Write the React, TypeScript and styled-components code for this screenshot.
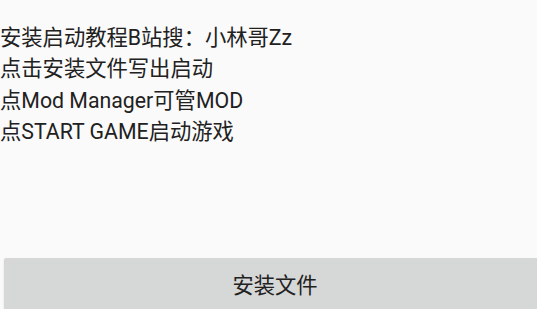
import React from "react";
import styled, { createGlobalStyle } from "styled-components";

const Global = createGlobalStyle`
  html, body { margin: 0; padding: 0; background: #fafafa; }
  body { width: 537px; height: 309px; overflow: hidden; }
`;

const Screen = styled.div`
  width: 537px;
  height: 309px;
  overflow: hidden;
  background: #fafafa;
  display: flex;
  flex-direction: column;
  font-family: Roboto, "Noto Sans CJK SC", sans-serif;
  color: #212121;
`;

const Info = styled.div`
  padding: 22px 0 0 0;
  display: flex;
  flex-direction: column;
  flex: 1;
`;

const Line = styled.div`
  font-size: 21.3px;
  line-height: 31.3px;
  white-space: nowrap;
`;

const ActionButton = styled.button`
  flex: none;
  margin: 0 0 -17px 4px;
  width: 542px;
  height: 68px;
  border: none;
  border-radius: 2px;
  background: #d6d7d7;
  box-shadow: 0 1px 2px rgba(0, 0, 0, 0.12);
  display: flex;
  align-items: center;
  justify-content: center;
  font-family: Roboto, "Noto Sans CJK SC", sans-serif;
  font-size: 21.3px;
  color: #212121;
  padding: 0 0 17px 0;
`;

const lines = [
  "安装启动教程B站搜：小林哥Zz",
  "点击安装文件写出启动",
  "点Mod Manager可管MOD",
  "点START GAME启动游戏",
];

export default function App() {
  return (
    <>
      <Global />
      <Screen>
        <Info>
          {lines.map((l) => (
            <Line key={l}>{l}</Line>
          ))}
        </Info>
        <ActionButton>安装文件</ActionButton>
      </Screen>
    </>
  );
}
